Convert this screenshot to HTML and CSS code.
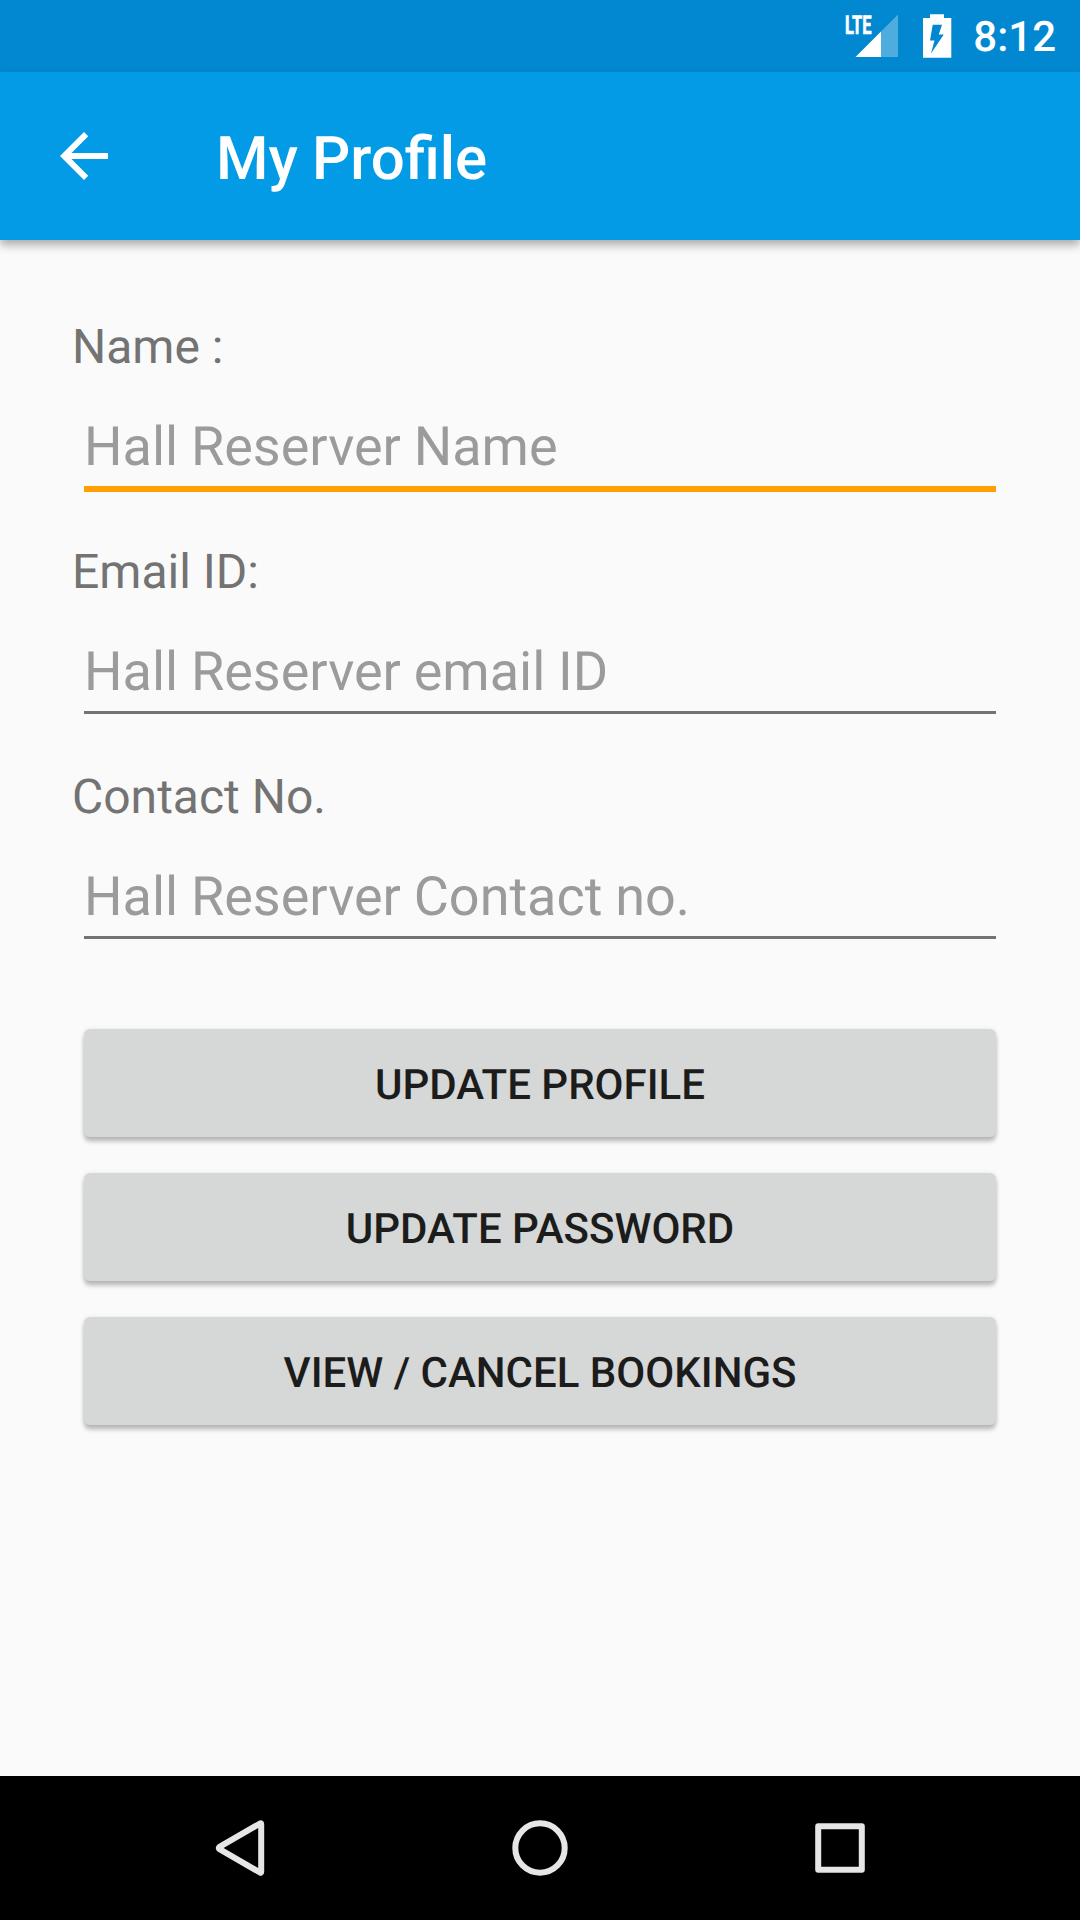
FILE: index.html
```html
<!DOCTYPE html>
<html lang="en">
<head>
<meta charset="utf-8">
<title>My Profile</title>
<link rel="stylesheet" href="styles.css">
</head>
<body>
<div class="screen">
  <div class="status-bar">
    <svg class="status-icons" width="110" height="72" viewBox="844 0 110 72" aria-hidden="true">
      <text class="network" x="845" y="33.6" textLength="26.500" lengthAdjust="spacingAndGlyphs">LTE</text>
      <path fill="#fff" fill-opacity=".3" d="M881 31.500L898 14.500V57H881z"/>
      <path fill="#fff" d="M855.500 57L881 31.500V57z"/>
      <path fill="#fff" fill-rule="evenodd" d="M930 14.300h14v3.700h7.300v39.700h-28.300V18h7zM932.700 24.700L930 40.500h4.500L931 53.500L943.800 34.500h-5L942 24.700z"/>
    </svg>
    <span class="clock">8:12</span>
  </div>
  <header class="app-bar">
    <svg class="back" width="72" height="72" viewBox="0 0 24 24" fill="#fff" aria-label="Back"><path d="M20 11H7.830l5.590-5.590L12 4l-8 8 8 8 1.410-1.410L7.830 13H20z"/></svg>
    <h1 class="title">My Profile</h1>
  </header>
  <main class="content">
    <div class="field">
      <label class="label" for="name">Name :</label>
      <input class="input active" id="name" type="text" placeholder="Hall Reserver Name">
    </div>
    <div class="field">
      <label class="label" for="email">Email ID:</label>
      <input class="input" id="email" type="text" placeholder="Hall Reserver email ID">
    </div>
    <div class="field">
      <label class="label" for="contact">Contact No.</label>
      <input class="input" id="contact" type="text" placeholder="Hall Reserver Contact no.">
    </div>
    <div class="actions">
      <button class="button" type="button">UPDATE PROFILE</button>
      <button class="button" type="button">UPDATE PASSWORD</button>
      <button class="button" type="button">VIEW / CANCEL BOOKINGS</button>
    </div>
  </main>
  <nav class="nav-bar">
    <svg class="nav-icon" width="72" height="72" viewBox="0 0 72 72"><path d="M56 11.500Q57.200 10.900 57.200 12V60Q57.200 61.100 56 60.500L15.500 37.200Q14 36 15.500 34.800z"/></svg>
    <svg class="nav-icon" width="72" height="72" viewBox="0 0 72 72"><circle cx="36" cy="36" r="24.700"/></svg>
    <svg class="nav-icon" width="72" height="72" viewBox="0 0 72 72"><rect x="14.200" y="14.200" width="43.600" height="43.600"/></svg>
  </nav>
</div>
</body>
</html>
```
FILE: styles.css
```css
* {
  box-sizing: border-box;
}

body {
  margin: 0;
  font-family: Roboto, sans-serif;
  text-rendering: geometricPrecision;
}

.screen {
  display: flex;
  flex-direction: column;
  width: 1080px;
  height: 1920px;
  overflow: hidden;
  background: #fafafa;
}

.status-bar {
  display: flex;
  justify-content: flex-end;
  flex: 0 0 72px;
  height: 72px;
  padding-right: 24px;
  background: #0288d1;
  color: #fff;
}

.status-icons {
  margin-right: 19px;
}

.network {
  fill: #fff;
  stroke: #fff;
  stroke-width: .7px;
  font-size: 26px;
  font-weight: 700;
}

.clock {
  padding-top: 2px;
  font-size: 42px;
  font-weight: 500;
  line-height: 72px;
}

.app-bar {
  display: flex;
  align-items: center;
  flex: 0 0 168px;
  padding-left: 48px;
  background: #039be5;
  box-shadow: 0 5px 9px rgba(0, 0, 0, .32);
}

.title {
  margin: 4px 0 0 96px;
  color: #fff;
  font-size: 60px;
  font-weight: 500;
  word-spacing: -.8px;
}

.content {
  flex: 1;
  padding: 78px 72px 0;
}

.field {
  display: flex;
  flex-direction: column;
  height: 225px;
}

.label {
  color: #737373;
  font-size: 48px;
  line-height: 57px;
}

.input {
  height: 75px;
  margin: 39px 12px 0;
  padding: 0 0 5px;
  border: 0;
  border-bottom: 3px solid #737373;
  border-radius: 0;
  outline: 0;
  background: transparent;
  color: #212121;
  font: 54px Roboto, sans-serif;
  word-spacing: -.6px;
  text-rendering: inherit;
}

.input.active {
  height: 78px;
  border-bottom: 6px solid #ffa000;
}

.input::placeholder {
  color: #9b9b9b;
  opacity: 1;
}

.actions {
  display: flex;
  flex-direction: column;
  gap: 36px;
  padding: 36px 12px 0;
}

.button {
  height: 108px;
  padding: 5px 0 0;
  border: 0;
  border-radius: 6px;
  background: #d6d7d7;
  box-shadow: 0 5px 4px rgba(0, 0, 0, .2), 0 1px 5px rgba(0, 0, 0, .14);
  color: #1c1c1c;
  font: 500 42px Roboto, sans-serif;
  text-rendering: inherit;
}

.nav-bar {
  display: flex;
  justify-content: space-between;
  align-items: center;
  flex: 0 0 144px;
  padding: 0 204px;
  background: #000;
}

.nav-icon {
  fill: none;
  stroke: #e6e6e6;
  stroke-width: 6px;
  stroke-linejoin: round;
}
```
